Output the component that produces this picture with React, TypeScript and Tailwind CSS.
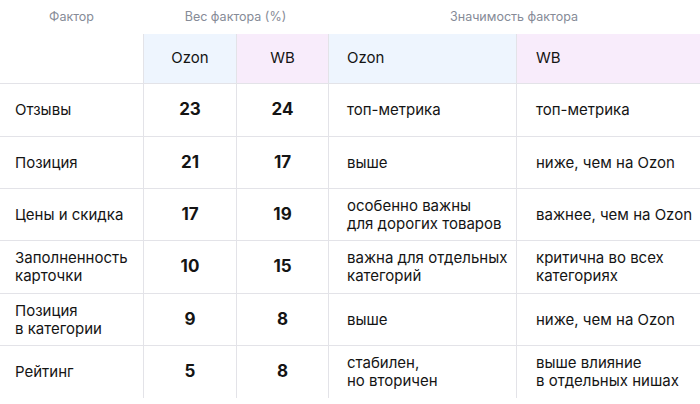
import React from "react"

type Row = {
  factor: string[]
  ozon: number
  wb: number
  ozonNote: string[]
  wbNote: string[]
  h: string
}

const rows: Row[] = [
  { factor: ["Отзывы"], ozon: 23, wb: 24, ozonNote: ["топ-метрика"], wbNote: ["топ-метрика"], h: "h-[53px]" },
  { factor: ["Позиция"], ozon: 21, wb: 17, ozonNote: ["выше"], wbNote: ["ниже, чем на Ozon"], h: "h-[52px]" },
  { factor: ["Цены и скидка"], ozon: 17, wb: 19, ozonNote: ["особенно важны", "для дорогих товаров"], wbNote: ["важнее, чем на Ozon"], h: "h-[52px]" },
  { factor: ["Заполненность", "карточки"], ozon: 10, wb: 15, ozonNote: ["важна для отдельных", "категорий"], wbNote: ["критична во всех", "категориях"], h: "h-[53px]" },
  { factor: ["Позиция", "в категории"], ozon: 9, wb: 8, ozonNote: ["выше"], wbNote: ["ниже, чем на Ozon"], h: "h-[52px]" },
  { factor: ["Рейтинг"], ozon: 5, wb: 8, ozonNote: ["стабилен,", "но вторичен"], wbNote: ["выше влияние", "в отдельных нишах"], h: "h-[52px]" },
]

const cols = "grid grid-cols-[143px_93px_92px_188px_184px]"

function Lines({ lines }: { lines: string[] }) {
  return (
    <div className="leading-[18px]">
      {lines.map((l, i) => (
        <div key={i}>{l}</div>
      ))}
    </div>
  )
}

export default function App() {
  return (
    <div className="w-[700px] h-[404px] bg-white text-[#141414] overflow-hidden" style={{ fontFamily: "Inter, 'Noto Sans', sans-serif" }}>
      {/* group labels */}
      <div className={`${cols} h-[34px] items-center text-[12.5px] text-[#868b97]`}>
        <div className="text-center">Фактор</div>
        <div className="col-span-2 text-center">Вес фактора (%)</div>
        <div className="col-span-2 text-center">Значимость фактора</div>
      </div>

      {/* header */}
      <div className={`${cols} h-[50px] border-b border-[#e3e3e8] text-[15px]`}>
        <div />
        <div className="flex items-center justify-center border-l border-[#e3e3e8] bg-[#eef5fe]">Ozon</div>
        <div className="flex items-center justify-center border-l border-[#e3e3e8] bg-[#f8ecfb]">WB</div>
        <div className="flex items-center border-l border-[#e3e3e8] bg-[#eef5fe] pl-[18px]">Ozon</div>
        <div className="flex items-center border-l border-[#e3e3e8] bg-[#f8ecfb] pl-[19px]">WB</div>
      </div>

      {rows.map((r, i) => (
        <div
          key={i}
          className={`${cols} ${r.h} text-[15px] ${i < rows.length - 1 ? "border-b border-[#e3e3e8]" : ""}`}
        >
          <div className="flex items-center pl-[15px]">
            <Lines lines={r.factor} />
          </div>
          <div className="flex items-center justify-center border-l border-[#e3e3e8] text-[17px] font-bold">{r.ozon}</div>
          <div className="flex items-center justify-center border-l border-[#e3e3e8] text-[17px] font-bold">{r.wb}</div>
          <div className="flex items-center border-l border-[#e3e3e8] pl-[18px]">
            <Lines lines={r.ozonNote} />
          </div>
          <div className="flex items-center border-l border-[#e3e3e8] pl-[19px]">
            <Lines lines={r.wbNote} />
          </div>
        </div>
      ))}
    </div>
  )
}
